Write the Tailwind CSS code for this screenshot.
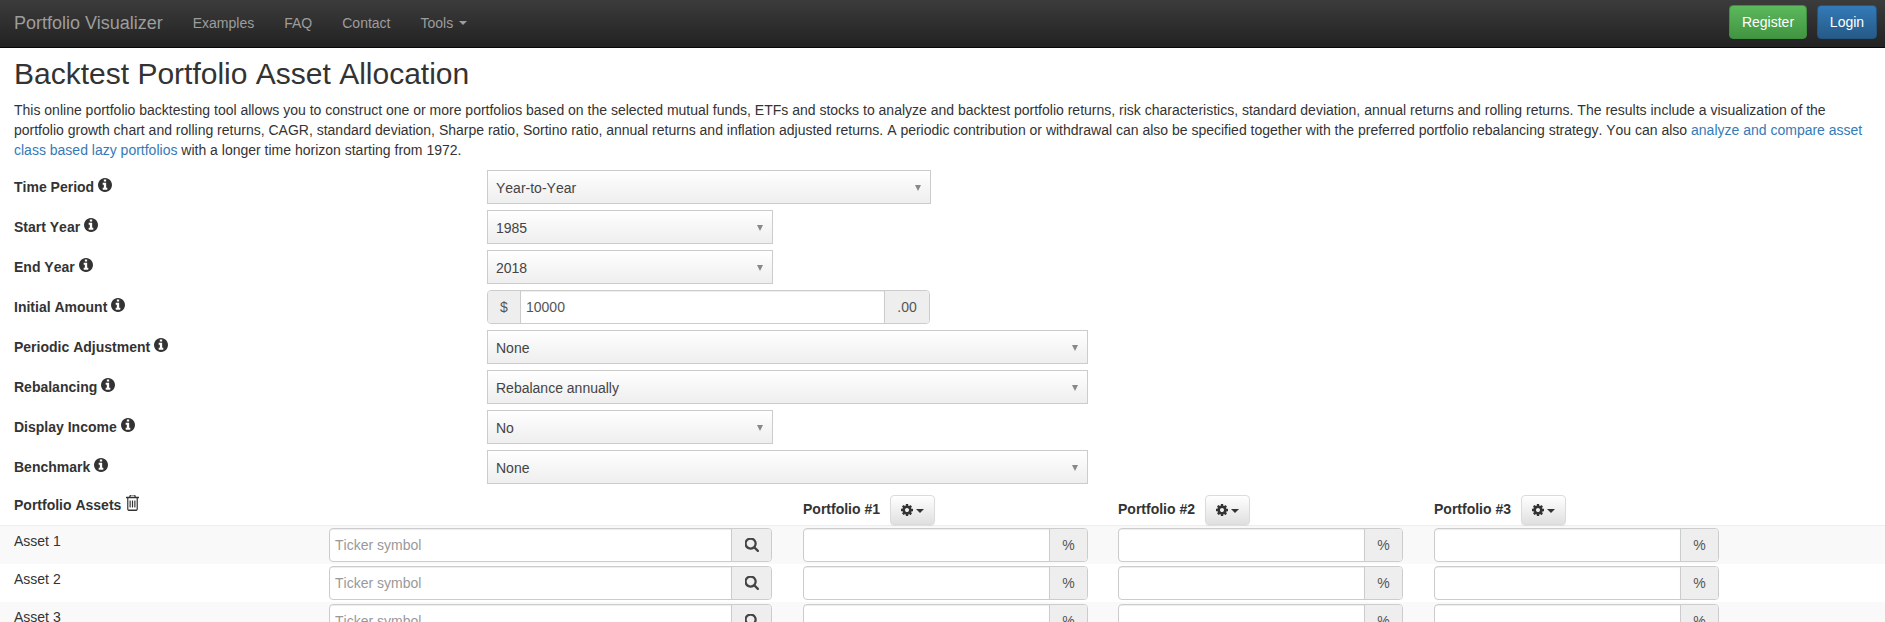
<!DOCTYPE html>
<html><head><meta charset="utf-8">
<script src="https://cdn.jsdelivr.net/npm/@tailwindcss/browser@4"></script>
<title>Portfolio Visualizer</title></head>
<body class="bg-white">
<div class="h-[622px] overflow-hidden [font-kerning:none] font-['Liberation_Sans',Arial,sans-serif] text-[14px] leading-[20px] text-[#333]">
<nav class="[font-kerning:auto] h-[48px] flex items-start justify-between bg-gradient-to-b from-[#3c3c3c] to-[#222] border-b border-[#080808] pl-[14px] pr-[8px]">
  <div class="flex items-center h-[46px] text-[#9d9d9d]">
    <a class="text-[18px] pr-[15px]">Portfolio Visualizer</a>
    <a class="px-[15px]">Examples</a>
    <a class="px-[15px]">FAQ</a>
    <a class="px-[15px]">Contact</a>
    <a class="px-[15px] flex items-center">Tools<span class="ml-[6px] w-0 h-0 border-x-[4px] border-t-[4px] border-x-transparent border-t-[#9d9d9d]"></span></a>
  </div>
  <div class="flex gap-[10px] pt-[5px] text-white">
    <a class="h-[34px] w-[78px] flex items-center justify-center rounded-[4px] border border-[#3e8f3e] bg-gradient-to-b from-[#5cb85c] to-[#419641]">Register</a>
    <a class="h-[34px] w-[60px] flex items-center justify-center rounded-[4px] border border-[#245580] bg-gradient-to-b from-[#337ab7] to-[#265a88]">Login</a>
  </div>
</nav>
<main class="pt-[9px]">
  <div class="px-[14px]">
    <h1 class="text-[30px] leading-[33px] font-normal mb-[10px]">Backtest Portfolio Asset Allocation</h1>
    <p class="mb-[10px]">This online portfolio backtesting tool allows you to construct one or more portfolios based on the selected mutual funds, ETFs and stocks to analyze and backtest portfolio returns, risk characteristics, standard deviation, annual returns and rolling returns. The results include a visualization of the portfolio growth chart and rolling returns, CAGR, standard deviation, Sharpe ratio, Sortino ratio, annual returns and inflation adjusted returns. A periodic contribution or withdrawal can also be specified together with the preferred portfolio rebalancing strategy. You can also <a class="text-[#337ab7]">analyze and compare asset class based lazy portfolios</a> with a longer time horizon starting from 1972.</p>

    <div class="flex flex-col gap-[6px]">
      <div class="flex h-[34px]">
        <label class="w-[473px] pt-[7px] font-bold flex items-start">Time Period<svg class="ml-[4px] mt-[1px] w-[14px] h-[14px]" viewBox="128 128 1536 1536" fill="#333"><path d="M1152 1376v-160q0-14-9-23t-23-9h-96v-512q0-14-9-23t-23-9h-320q-14 0-23 9t-9 23v160q0 14 9 23t23 9h96v320h-96q-14 0-23 9t-9 23v160q0 14 9 23t23 9h448q14 0 23-9t9-23zm-128-896v-160q0-14-9-23t-23-9h-192q-14 0-23 9t-9 23v160q0 14 9 23t23 9h192q14 0 23-9t9-23zm640 416q0 209-103 385.5t-279.5 279.5-385.5 103-385.5-103-279.5-279.5-103-385.5 103-385.5 279.5-279.5 385.5-103 385.5 103 279.5 279.5 103 385.5z"/></svg></label>
        <div class="w-[444px] flex items-center justify-between pl-[8px] pr-[9px] pt-[2px] border border-[#ccc] bg-gradient-to-b from-white to-[#eee] text-[#444]">Year-to-Year<svg class="w-[6px] h-[6px]" viewBox="0 0 6 6" fill="#888"><polygon points="0,0 6,0 3,6"/></svg></div>
      </div>
      <div class="flex h-[34px]">
        <label class="w-[473px] pt-[7px] font-bold flex items-start">Start Year<svg class="ml-[4px] mt-[1px] w-[14px] h-[14px]" viewBox="128 128 1536 1536" fill="#333"><path d="M1152 1376v-160q0-14-9-23t-23-9h-96v-512q0-14-9-23t-23-9h-320q-14 0-23 9t-9 23v160q0 14 9 23t23 9h96v320h-96q-14 0-23 9t-9 23v160q0 14 9 23t23 9h448q14 0 23-9t9-23zm-128-896v-160q0-14-9-23t-23-9h-192q-14 0-23 9t-9 23v160q0 14 9 23t23 9h192q14 0 23-9t9-23zm640 416q0 209-103 385.5t-279.5 279.5-385.5 103-385.5-103-279.5-279.5-103-385.5 103-385.5 279.5-279.5 385.5-103 385.5 103 279.5 279.5 103 385.5z"/></svg></label>
        <div class="w-[286px] flex items-center justify-between pl-[8px] pr-[9px] pt-[2px] border border-[#ccc] bg-gradient-to-b from-white to-[#eee] text-[#444]">1985<svg class="w-[6px] h-[6px]" viewBox="0 0 6 6" fill="#888"><polygon points="0,0 6,0 3,6"/></svg></div>
      </div>
      <div class="flex h-[34px]">
        <label class="w-[473px] pt-[7px] font-bold flex items-start">End Year<svg class="ml-[4px] mt-[1px] w-[14px] h-[14px]" viewBox="128 128 1536 1536" fill="#333"><path d="M1152 1376v-160q0-14-9-23t-23-9h-96v-512q0-14-9-23t-23-9h-320q-14 0-23 9t-9 23v160q0 14 9 23t23 9h96v320h-96q-14 0-23 9t-9 23v160q0 14 9 23t23 9h448q14 0 23-9t9-23zm-128-896v-160q0-14-9-23t-23-9h-192q-14 0-23 9t-9 23v160q0 14 9 23t23 9h192q14 0 23-9t9-23zm640 416q0 209-103 385.5t-279.5 279.5-385.5 103-385.5-103-279.5-279.5-103-385.5 103-385.5 279.5-279.5 385.5-103 385.5 103 279.5 279.5 103 385.5z"/></svg></label>
        <div class="w-[286px] flex items-center justify-between pl-[8px] pr-[9px] pt-[2px] border border-[#ccc] bg-gradient-to-b from-white to-[#eee] text-[#444]">2018<svg class="w-[6px] h-[6px]" viewBox="0 0 6 6" fill="#888"><polygon points="0,0 6,0 3,6"/></svg></div>
      </div>
      <div class="flex h-[34px]">
        <label class="w-[473px] pt-[7px] font-bold flex items-start">Initial Amount<svg class="ml-[4px] mt-[1px] w-[14px] h-[14px]" viewBox="128 128 1536 1536" fill="#333"><path d="M1152 1376v-160q0-14-9-23t-23-9h-96v-512q0-14-9-23t-23-9h-320q-14 0-23 9t-9 23v160q0 14 9 23t23 9h96v320h-96q-14 0-23 9t-9 23v160q0 14 9 23t23 9h448q14 0 23-9t9-23zm-128-896v-160q0-14-9-23t-23-9h-192q-14 0-23 9t-9 23v160q0 14 9 23t23 9h192q14 0 23-9t9-23zm640 416q0 209-103 385.5t-279.5 279.5-385.5 103-385.5-103-279.5-279.5-103-385.5 103-385.5 279.5-279.5 385.5-103 385.5 103 279.5 279.5 103 385.5z"/></svg></label>
        <div class="w-[443px] flex rounded-[4px] border border-[#ccc] text-[#555] overflow-hidden">
          <span class="w-[33px] flex items-center justify-center bg-[#eee] border-r border-[#ccc]">$</span>
          <input class="flex-1 min-w-0 px-[5px] outline-none shadow-[inset_0_1px_1px_rgba(0,0,0,0.075)]" value="10000">
          <span class="w-[45px] flex items-center justify-center bg-[#eee] border-l border-[#ccc]">.00</span>
        </div>
      </div>
      <div class="flex h-[34px]">
        <label class="w-[473px] pt-[7px] font-bold flex items-start">Periodic Adjustment<svg class="ml-[4px] mt-[1px] w-[14px] h-[14px]" viewBox="128 128 1536 1536" fill="#333"><path d="M1152 1376v-160q0-14-9-23t-23-9h-96v-512q0-14-9-23t-23-9h-320q-14 0-23 9t-9 23v160q0 14 9 23t23 9h96v320h-96q-14 0-23 9t-9 23v160q0 14 9 23t23 9h448q14 0 23-9t9-23zm-128-896v-160q0-14-9-23t-23-9h-192q-14 0-23 9t-9 23v160q0 14 9 23t23 9h192q14 0 23-9t9-23zm640 416q0 209-103 385.5t-279.5 279.5-385.5 103-385.5-103-279.5-279.5-103-385.5 103-385.5 279.5-279.5 385.5-103 385.5 103 279.5 279.5 103 385.5z"/></svg></label>
        <div class="w-[601px] flex items-center justify-between pl-[8px] pr-[9px] pt-[2px] border border-[#ccc] bg-gradient-to-b from-white to-[#eee] text-[#444]">None<svg class="w-[6px] h-[6px]" viewBox="0 0 6 6" fill="#888"><polygon points="0,0 6,0 3,6"/></svg></div>
      </div>
      <div class="flex h-[34px]">
        <label class="w-[473px] pt-[7px] font-bold flex items-start">Rebalancing<svg class="ml-[4px] mt-[1px] w-[14px] h-[14px]" viewBox="128 128 1536 1536" fill="#333"><path d="M1152 1376v-160q0-14-9-23t-23-9h-96v-512q0-14-9-23t-23-9h-320q-14 0-23 9t-9 23v160q0 14 9 23t23 9h96v320h-96q-14 0-23 9t-9 23v160q0 14 9 23t23 9h448q14 0 23-9t9-23zm-128-896v-160q0-14-9-23t-23-9h-192q-14 0-23 9t-9 23v160q0 14 9 23t23 9h192q14 0 23-9t9-23zm640 416q0 209-103 385.5t-279.5 279.5-385.5 103-385.5-103-279.5-279.5-103-385.5 103-385.5 279.5-279.5 385.5-103 385.5 103 279.5 279.5 103 385.5z"/></svg></label>
        <div class="w-[601px] flex items-center justify-between pl-[8px] pr-[9px] pt-[2px] border border-[#ccc] bg-gradient-to-b from-white to-[#eee] text-[#444]">Rebalance annually<svg class="w-[6px] h-[6px]" viewBox="0 0 6 6" fill="#888"><polygon points="0,0 6,0 3,6"/></svg></div>
      </div>
      <div class="flex h-[34px]">
        <label class="w-[473px] pt-[7px] font-bold flex items-start">Display Income<svg class="ml-[4px] mt-[1px] w-[14px] h-[14px]" viewBox="128 128 1536 1536" fill="#333"><path d="M1152 1376v-160q0-14-9-23t-23-9h-96v-512q0-14-9-23t-23-9h-320q-14 0-23 9t-9 23v160q0 14 9 23t23 9h96v320h-96q-14 0-23 9t-9 23v160q0 14 9 23t23 9h448q14 0 23-9t9-23zm-128-896v-160q0-14-9-23t-23-9h-192q-14 0-23 9t-9 23v160q0 14 9 23t23 9h192q14 0 23-9t9-23zm640 416q0 209-103 385.5t-279.5 279.5-385.5 103-385.5-103-279.5-279.5-103-385.5 103-385.5 279.5-279.5 385.5-103 385.5 103 279.5 279.5 103 385.5z"/></svg></label>
        <div class="w-[286px] flex items-center justify-between pl-[8px] pr-[9px] pt-[2px] border border-[#ccc] bg-gradient-to-b from-white to-[#eee] text-[#444]">No<svg class="w-[6px] h-[6px]" viewBox="0 0 6 6" fill="#888"><polygon points="0,0 6,0 3,6"/></svg></div>
      </div>
      <div class="flex h-[34px]">
        <label class="w-[473px] pt-[7px] font-bold flex items-start">Benchmark<svg class="ml-[4px] mt-[1px] w-[14px] h-[14px]" viewBox="128 128 1536 1536" fill="#333"><path d="M1152 1376v-160q0-14-9-23t-23-9h-96v-512q0-14-9-23t-23-9h-320q-14 0-23 9t-9 23v160q0 14 9 23t23 9h96v320h-96q-14 0-23 9t-9 23v160q0 14 9 23t23 9h448q14 0 23-9t9-23zm-128-896v-160q0-14-9-23t-23-9h-192q-14 0-23 9t-9 23v160q0 14 9 23t23 9h192q14 0 23-9t9-23zm640 416q0 209-103 385.5t-279.5 279.5-385.5 103-385.5-103-279.5-279.5-103-385.5 103-385.5 279.5-279.5 385.5-103 385.5 103 279.5 279.5 103 385.5z"/></svg></label>
        <div class="w-[601px] flex items-center justify-between pl-[8px] pr-[9px] pt-[2px] border border-[#ccc] bg-gradient-to-b from-white to-[#eee] text-[#444]">None<svg class="w-[6px] h-[6px]" viewBox="0 0 6 6" fill="#888"><polygon points="0,0 6,0 3,6"/></svg></div>
      </div>
    </div>
  </div>

  <div class="mt-[11px] h-[30px] flex px-[14px] border-b border-[#eee] font-bold box-content">
    <div class="w-[789px] shrink-0 flex items-start"><span>Portfolio Assets</span><svg class="ml-[5px] w-[13px] h-[16px]" viewBox="192 217 1408 1447" preserveAspectRatio="none" fill="#333"><path d="M704 736v576q0 14-9 23t-23 9h-64q-14 0-23-9t-9-23v-576q0-14 9-23t23-9h64q14 0 23 9t9 23zm256 0v576q0 14-9 23t-23 9h-64q-14 0-23-9t-9-23v-576q0-14 9-23t23-9h64q14 0 23 9t9 23zm256 0v576q0 14-9 23t-23 9h-64q-14 0-23-9t-9-23v-576q0-14 9-23t23-9h64q14 0 23 9t9 23zm128 724v-948h-896v948q0 22 7 40.500t14.500 27 10.500 8.500h832q3 0 10.500-8.500t14.500-27 7-40.500zm-672-1076h448l-48-117q-7-9-17-11h-317q-10 2-17 11zm928 32v64q0 14-9 23t-23 9h-96v948q0 83-47 143.500t-113 60.500h-832q-66 0-113-58.500t-47-141.500v-952h-96q-14 0-23-9t-9-23v-64q0-14 9-23t23-9h309l70-167q15-37 54-63t79-26h320q40 0 79 26t54 63l70 167h309q14 0 23 9t9 23z"/></svg></div>
    <div class="w-[315px] shrink-0 flex items-start gap-[10px]"><span class="pt-[4px]">Portfolio #1</span><button class="w-[45px] h-[30px] flex items-center justify-center gap-[3px] rounded-[4px] border border-[#dbdbdb] bg-gradient-to-b from-white to-[#e0e0e0] shadow-[0_1px_1px_rgba(0,0,0,0.075)]"><svg class="w-[12px] h-[12px]" viewBox="128 128 1536 1536" fill="#333"><path d="M1152 896q0-106-75-181t-181-75-181 75-75 181 75 181 181 75 181-75 75-181zm512-109v222q0 12-8 23t-20 13l-185 28q-19 54-39 91 35 50 107 138 10 12 10 25t-9 23q-27 37-99 108t-94 71q-12 0-26-9l-138-108q-44 23-91 38-16 136-29 186-7 28-36 28h-222q-14 0-24.500-8.500t-11.500-21.500l-28-184q-49-16-90-37l-141 107q-10 9-25 9-14 0-25-11-126-114-165-168-7-10-7-23 0-12 8-23 15-21 51-66.500t54-70.500q-27-50-41-99l-183-27q-13-2-21-12.500t-8-23.500v-222q0-12 8-23t19-13l186-28q14-46 39-92-40-57-107-138-10-12-10-24 0-10 9-23 26-36 98.500-107.500t94.500-71.500q13 0 26 10l138 107q44-23 91-38 16-136 29-186 7-28 36-28h222q14 0 24.500 8.500t11.500 21.500l28 184q49 16 90 37l142-107q9-9 24-9 13 0 25 10 129 119 165 170 7 8 7 22 0 12-8 23-15 21-51 66.500t-54 70.500q26 50 41 98l183 28q13 2 21 12.500t8 23.500z"/></svg><span class="w-0 h-0 mt-[2px] border-x-[4px] border-t-[4px] border-x-transparent border-t-[#333]"></span></button></div>
    <div class="w-[316px] shrink-0 flex items-start gap-[10px]"><span class="pt-[4px]">Portfolio #2</span><button class="w-[45px] h-[30px] flex items-center justify-center gap-[3px] rounded-[4px] border border-[#dbdbdb] bg-gradient-to-b from-white to-[#e0e0e0] shadow-[0_1px_1px_rgba(0,0,0,0.075)]"><svg class="w-[12px] h-[12px]" viewBox="128 128 1536 1536" fill="#333"><path d="M1152 896q0-106-75-181t-181-75-181 75-75 181 75 181 181 75 181-75 75-181zm512-109v222q0 12-8 23t-20 13l-185 28q-19 54-39 91 35 50 107 138 10 12 10 25t-9 23q-27 37-99 108t-94 71q-12 0-26-9l-138-108q-44 23-91 38-16 136-29 186-7 28-36 28h-222q-14 0-24.500-8.500t-11.500-21.500l-28-184q-49-16-90-37l-141 107q-10 9-25 9-14 0-25-11-126-114-165-168-7-10-7-23 0-12 8-23 15-21 51-66.500t54-70.500q-27-50-41-99l-183-27q-13-2-21-12.500t-8-23.500v-222q0-12 8-23t19-13l186-28q14-46 39-92-40-57-107-138-10-12-10-24 0-10 9-23 26-36 98.500-107.500t94.500-71.500q13 0 26 10l138 107q44-23 91-38 16-136 29-186 7-28 36-28h222q14 0 24.500 8.500t11.500 21.500l28 184q49 16 90 37l142-107q9-9 24-9 13 0 25 10 129 119 165 170 7 8 7 22 0 12-8 23-15 21-51 66.500t-54 70.500q26 50 41 98l183 28q13 2 21 12.500t8 23.500z"/></svg><span class="w-0 h-0 mt-[2px] border-x-[4px] border-t-[4px] border-x-transparent border-t-[#333]"></span></button></div>
    <div class="w-[285px] shrink-0 flex items-start gap-[10px]"><span class="pt-[4px]">Portfolio #3</span><button class="w-[45px] h-[30px] flex items-center justify-center gap-[3px] rounded-[4px] border border-[#dbdbdb] bg-gradient-to-b from-white to-[#e0e0e0] shadow-[0_1px_1px_rgba(0,0,0,0.075)]"><svg class="w-[12px] h-[12px]" viewBox="128 128 1536 1536" fill="#333"><path d="M1152 896q0-106-75-181t-181-75-181 75-75 181 75 181 181 75 181-75 75-181zm512-109v222q0 12-8 23t-20 13l-185 28q-19 54-39 91 35 50 107 138 10 12 10 25t-9 23q-27 37-99 108t-94 71q-12 0-26-9l-138-108q-44 23-91 38-16 136-29 186-7 28-36 28h-222q-14 0-24.500-8.500t-11.500-21.500l-28-184q-49-16-90-37l-141 107q-10 9-25 9-14 0-25-11-126-114-165-168-7-10-7-23 0-12 8-23 15-21 51-66.500t54-70.500q-27-50-41-99l-183-27q-13-2-21-12.500t-8-23.500v-222q0-12 8-23t19-13l186-28q14-46 39-92-40-57-107-138-10-12-10-24 0-10 9-23 26-36 98.500-107.500t94.500-71.500q13 0 26 10l138 107q44-23 91-38 16-136 29-186 7-28 36-28h222q14 0 24.500 8.500t11.500 21.500l28 184q49 16 90 37l142-107q9-9 24-9 13 0 25 10 129 119 165 170 7 8 7 22 0 12-8 23-15 21-51 66.500t-54 70.500q26 50 41 98l183 28q13 2 21 12.500t8 23.500z"/></svg><span class="w-0 h-0 mt-[2px] border-x-[4px] border-t-[4px] border-x-transparent border-t-[#333]"></span></button></div>
  </div>

  <div class="h-[38px] flex items-start pt-[2px] px-[14px] bg-[#f9f9f9]">
    <div class="w-[315px] pt-[3px]">Asset 1</div>
    <div class="w-[443px] h-[34px] flex rounded-[4px] border border-[#ccc] bg-white overflow-hidden"><input class="flex-1 min-w-0 px-[5px] outline-none placeholder:text-[#999] shadow-[inset_0_1px_1px_rgba(0,0,0,0.075)]" placeholder="Ticker symbol"><span class="w-[40px] flex items-center justify-center bg-[#eee] border-l border-[#ccc]"><svg class="w-[14px] h-[14px]" viewBox="128 192 1600 1600" fill="#444"><path d="M1216 832q0-185-131.500-316.500t-316.500-131.500-316.500 131.500-131.500 316.500 131.500 316.500 316.500 131.500 316.500-131.500 131.500-316.500zm512 832q0 52-38 90t-90 38q-54 0-90-38l-343-342q-179 124-399 124-143 0-273.500-55.500t-225-150-150-225-55.500-273.500 55.500-273.500 150-225 225-150 273.500-55.500 273.500 55.500 225 150 150 225 55.500 273.500q0 220-124 399l343 343q37 37 37 90z"/></svg></span></div>
    <div class="ml-[31px] w-[285px] h-[34px] flex rounded-[4px] border border-[#ccc] bg-white overflow-hidden"><input class="flex-1 min-w-0 px-[5px] outline-none shadow-[inset_0_1px_1px_rgba(0,0,0,0.075)]"><span class="w-[38px] flex items-center justify-center bg-[#eee] border-l border-[#ccc] text-[#555]">%</span></div>
    <div class="ml-[30px] w-[285px] h-[34px] flex rounded-[4px] border border-[#ccc] bg-white overflow-hidden"><input class="flex-1 min-w-0 px-[5px] outline-none shadow-[inset_0_1px_1px_rgba(0,0,0,0.075)]"><span class="w-[38px] flex items-center justify-center bg-[#eee] border-l border-[#ccc] text-[#555]">%</span></div>
    <div class="ml-[31px] w-[285px] h-[34px] flex rounded-[4px] border border-[#ccc] bg-white overflow-hidden"><input class="flex-1 min-w-0 px-[5px] outline-none shadow-[inset_0_1px_1px_rgba(0,0,0,0.075)]"><span class="w-[38px] flex items-center justify-center bg-[#eee] border-l border-[#ccc] text-[#555]">%</span></div>
  </div>
  <div class="h-[38px] flex items-start pt-[2px] px-[14px] bg-white">
    <div class="w-[315px] pt-[3px]">Asset 2</div>
    <div class="w-[443px] h-[34px] flex rounded-[4px] border border-[#ccc] bg-white overflow-hidden"><input class="flex-1 min-w-0 px-[5px] outline-none placeholder:text-[#999] shadow-[inset_0_1px_1px_rgba(0,0,0,0.075)]" placeholder="Ticker symbol"><span class="w-[40px] flex items-center justify-center bg-[#eee] border-l border-[#ccc]"><svg class="w-[14px] h-[14px]" viewBox="128 192 1600 1600" fill="#444"><path d="M1216 832q0-185-131.500-316.500t-316.500-131.500-316.500 131.500-131.500 316.500 131.500 316.500 316.500 131.500 316.500-131.500 131.500-316.500zm512 832q0 52-38 90t-90 38q-54 0-90-38l-343-342q-179 124-399 124-143 0-273.500-55.500t-225-150-150-225-55.500-273.500 55.500-273.500 150-225 225-150 273.500-55.500 273.500 55.500 225 150 150 225 55.500 273.500q0 220-124 399l343 343q37 37 37 90z"/></svg></span></div>
    <div class="ml-[31px] w-[285px] h-[34px] flex rounded-[4px] border border-[#ccc] bg-white overflow-hidden"><input class="flex-1 min-w-0 px-[5px] outline-none shadow-[inset_0_1px_1px_rgba(0,0,0,0.075)]"><span class="w-[38px] flex items-center justify-center bg-[#eee] border-l border-[#ccc] text-[#555]">%</span></div>
    <div class="ml-[30px] w-[285px] h-[34px] flex rounded-[4px] border border-[#ccc] bg-white overflow-hidden"><input class="flex-1 min-w-0 px-[5px] outline-none shadow-[inset_0_1px_1px_rgba(0,0,0,0.075)]"><span class="w-[38px] flex items-center justify-center bg-[#eee] border-l border-[#ccc] text-[#555]">%</span></div>
    <div class="ml-[31px] w-[285px] h-[34px] flex rounded-[4px] border border-[#ccc] bg-white overflow-hidden"><input class="flex-1 min-w-0 px-[5px] outline-none shadow-[inset_0_1px_1px_rgba(0,0,0,0.075)]"><span class="w-[38px] flex items-center justify-center bg-[#eee] border-l border-[#ccc] text-[#555]">%</span></div>
  </div>
  <div class="h-[38px] flex items-start pt-[2px] px-[14px] bg-[#f9f9f9]">
    <div class="w-[315px] pt-[3px]">Asset 3</div>
    <div class="w-[443px] h-[34px] flex rounded-[4px] border border-[#ccc] bg-white overflow-hidden"><input class="flex-1 min-w-0 px-[5px] outline-none placeholder:text-[#999] shadow-[inset_0_1px_1px_rgba(0,0,0,0.075)]" placeholder="Ticker symbol"><span class="w-[40px] flex items-center justify-center bg-[#eee] border-l border-[#ccc]"><svg class="w-[14px] h-[14px]" viewBox="128 192 1600 1600" fill="#444"><path d="M1216 832q0-185-131.500-316.500t-316.500-131.500-316.500 131.500-131.500 316.500 131.500 316.500 316.500 131.500 316.500-131.500 131.500-316.500zm512 832q0 52-38 90t-90 38q-54 0-90-38l-343-342q-179 124-399 124-143 0-273.500-55.500t-225-150-150-225-55.500-273.500 55.500-273.500 150-225 225-150 273.500-55.500 273.500 55.500 225 150 150 225 55.500 273.500q0 220-124 399l343 343q37 37 37 90z"/></svg></span></div>
    <div class="ml-[31px] w-[285px] h-[34px] flex rounded-[4px] border border-[#ccc] bg-white overflow-hidden"><input class="flex-1 min-w-0 px-[5px] outline-none shadow-[inset_0_1px_1px_rgba(0,0,0,0.075)]"><span class="w-[38px] flex items-center justify-center bg-[#eee] border-l border-[#ccc] text-[#555]">%</span></div>
    <div class="ml-[30px] w-[285px] h-[34px] flex rounded-[4px] border border-[#ccc] bg-white overflow-hidden"><input class="flex-1 min-w-0 px-[5px] outline-none shadow-[inset_0_1px_1px_rgba(0,0,0,0.075)]"><span class="w-[38px] flex items-center justify-center bg-[#eee] border-l border-[#ccc] text-[#555]">%</span></div>
    <div class="ml-[31px] w-[285px] h-[34px] flex rounded-[4px] border border-[#ccc] bg-white overflow-hidden"><input class="flex-1 min-w-0 px-[5px] outline-none shadow-[inset_0_1px_1px_rgba(0,0,0,0.075)]"><span class="w-[38px] flex items-center justify-center bg-[#eee] border-l border-[#ccc] text-[#555]">%</span></div>
  </div>
</main>
</div>
</body></html>
